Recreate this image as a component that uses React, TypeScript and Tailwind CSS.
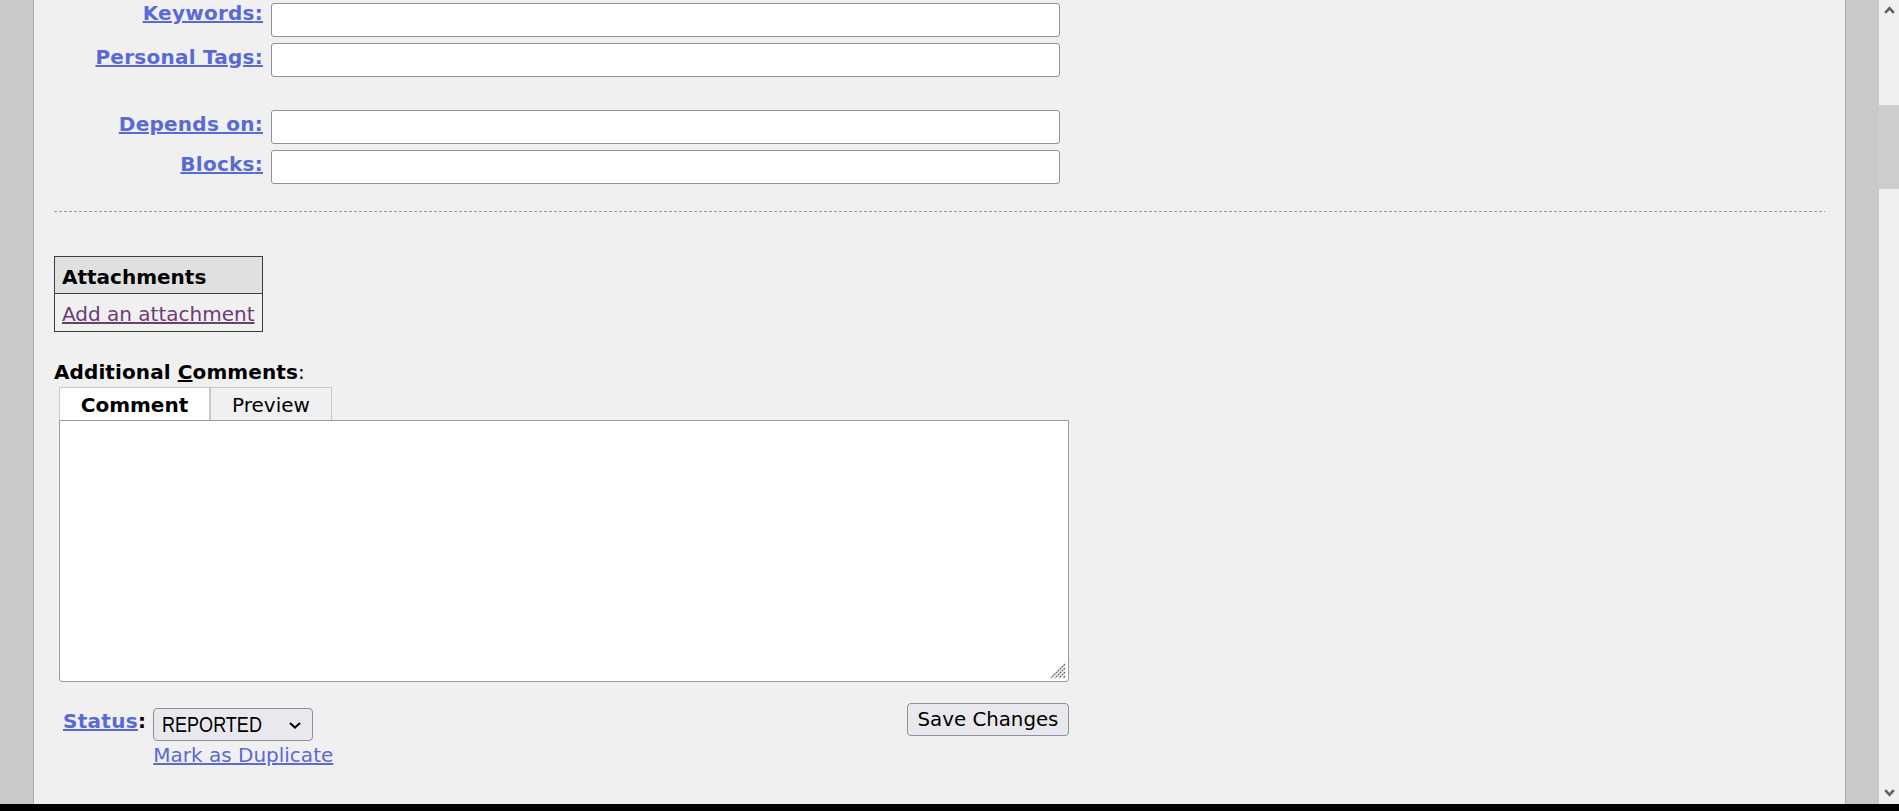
import React from 'react';

const fields = ['Keywords', 'Personal Tags', '', 'Depends on', 'Blocks'];

const FieldRow = ({ label, first }: { label: string; first?: boolean }) => {
  if (!label) return <div className="col-span-2 h-[21px]" />;
  return (
    <>
      <div className={`text-right font-bold leading-[20px] tracking-[0.25px] ${first ? '' : 'pt-[4px]'}`}>
        <a href="#" className="text-[#5a6ad4] underline">
          {label}:
        </a>
      </div>
      <input
        type="text"
        className="h-[34px] w-[789px] rounded-[3px] border border-[#8f8f9d] bg-white px-1 outline-none"
      />
    </>
  );
};

const Scrollbar = () => (
  <div className="flex w-[20px] shrink-0 flex-col bg-[#f0f0f0]">
    <svg className="ml-[5px] mt-[5px]" width="11" height="9" viewBox="0 0 11 9">
      <path d="M1.2 7.8 L5.5 3.2 L9.8 7.8" fill="none" stroke="#606060" strokeWidth="2.6" />
    </svg>
    <div className="mt-[91px] h-[84px] w-full bg-[#cdcdcd]" />
    <svg className="mb-[6px] ml-[5px] mt-auto" width="11" height="9" viewBox="0 0 11 9">
      <path d="M1.2 1.2 L5.5 5.8 L9.8 1.2" fill="none" stroke="#606060" strokeWidth="2.6" />
    </svg>
  </div>
);

export default function App() {
  return (
    <div className="flex h-[811px] w-full flex-col overflow-hidden bg-[#f0f0f0] font-['DejaVu_Sans',sans-serif] text-[20px] text-black">
      <div className="flex min-h-0 flex-1">
        <div className="w-[34px] shrink-0 border-r border-[#a7aabb] bg-[#c9c9c9]" />

        <main className="min-w-0 flex-1 px-[20px] pt-[3px]">
          <div className="grid grid-cols-[209px_789px] gap-x-[8px] gap-y-[6px]">
            {fields.map((f, i) => (
              <FieldRow key={i} label={f} first={i === 0} />
            ))}
          </div>

          <div className="mt-[27px] h-px bg-[repeating-linear-gradient(to_right,#999999_0_3px,transparent_3px_5px)]" />

          {/* attachments */}
          <div className="mt-[44px] w-fit border border-[#3c3c3c]">
            <div className="flex h-[37px] items-center border-b border-[#3c3c3c] bg-[#e0e0e0] px-[7px] pt-[3px] font-bold">
              Attachments
            </div>
            <div className="flex h-[37px] items-center px-[7px] pt-[2px]">
              <a href="#" className="text-[#6b3d73] underline">
                Add an attachment
              </a>
            </div>
          </div>

          <div className="mt-[30px] leading-[20px]">
            <span className="font-bold tracking-[0.1px]">
              Additional <u>C</u>omments
            </span>
            :
          </div>

          <div className="ml-[5px] w-[1010px]">
            <div className="mt-[5px] flex h-[33px]">
              <div className="flex w-[151px] items-center justify-center border-l border-r border-t border-[#c8c8c8] bg-white pt-px font-bold">
                Comment
              </div>
              <div className="flex w-[122px] items-center justify-center border-l border-r border-t border-[#c8c8c8] bg-[#f0f0f0] pt-px">
                Preview
              </div>
            </div>
            <div className="relative">
              <textarea className="block h-[262px] w-full resize-none rounded-bl-[3px] rounded-br-[3px] border border-[#9a9aab] bg-white p-1 outline-none" />
              <svg className="absolute bottom-[3px] right-[3px]" width="18" height="18" viewBox="0 0 18 18">
                <path
                  d="M17 3 L3 17 M17 7 L7 17 M17 11 L11 17 M17 15 L15 17"
                  stroke="#6a6a6a"
                  strokeWidth="1.4"
                  strokeDasharray="2 0.7"
                />
              </svg>
            </div>

            {/* status + save */}
            <div className="mt-[22px] flex items-start justify-between pl-[4px]">
              <div className="flex items-start">
                <div className="mt-[7px] font-bold leading-[20px] tracking-[0.3px]">
                  <a href="#" className="text-[#5a6ad4] underline">
                    Status
                  </a>
                  :
                </div>
                <div className="ml-[7px] flex flex-col">
                  <div className="relative mt-[4px] flex h-[33px] w-[160px] items-center rounded-[4px] border border-[#8f8f9d] bg-[#e9e9ed] pl-[8px] font-['Liberation_Sans',sans-serif] text-[22px]">
                    <span className="inline-block origin-left scale-x-[0.82]">REPORTED</span>
                    <svg className="absolute right-[11px] top-[13px]" width="12" height="7" viewBox="0 0 12 7">
                      <path d="M1 1 L6 5.6 L11 1" fill="none" stroke="#000" strokeWidth="2" />
                    </svg>
                  </div>
                  <a href="#" className="-mt-px text-[#5a6ad4] underline">
                    Mark as Duplicate
                  </a>
                </div>
              </div>
              <button className="-mt-px h-[33px] w-[162px] rounded-[4px] border border-[#8f8f9d] bg-[#e9e9ed] pt-px text-[19.8px]">
                Save Changes
              </button>
            </div>
          </div>
        </main>

        <div className="w-[34px] shrink-0 border-l border-[#a7aabb] bg-[#c9c9c9]" />
        <Scrollbar />
      </div>
      <div className="h-[7px] shrink-0 bg-black" />
    </div>
  );
}
